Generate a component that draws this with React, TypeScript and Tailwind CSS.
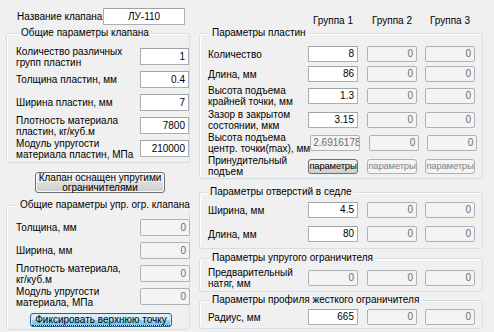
import React from "react";

function Field({ v, dis, cls, center }: { v: string; dis?: boolean; cls: string; center?: boolean }) {
  return (
    <div
      className={`${cls} shrink-0 flex items-center ${center ? "justify-center" : "justify-end pr-[3px]"} leading-none border ${
        dis
          ? "bg-[#f4f4f4] border-[#adb2b5] text-[#6d6d6d] rounded-[2px]"
          : "bg-white border-[#abadb3] border-t-[#9ea2a7] text-black"
      }`}
    >
      {v}
    </div>
  );
}

function Title({ children, cls }: { children: React.ReactNode; cls: string }) {
  return <div className={`self-start -mt-[7px] px-[2px] bg-[#f0f0f0] leading-[12px] whitespace-nowrap ${cls}`}>{children}</div>;
}

function LRow({ l1, l2, v, dis }: { l1: string; l2?: string; v: string; dis?: boolean }) {
  return (
    <div className="flex items-center h-[23px]">
      <div className="flex-1 pl-[9px] leading-[11px]">
        {l1}
        {l2 && <br />}
        {l2}
      </div>
      <Field v={v} dis={dis} cls={dis ? "w-[50px] h-[17px] -mr-[1px]" : "w-[49px] h-[17px]"} />
    </div>
  );
}

function RRow({
  h,
  l1,
  l2,
  v1,
  d1,
  v2 = "0",
  v3 = "0",
}: {
  h: string;
  l1: string;
  l2?: string;
  v1: string;
  d1?: boolean;
  v2?: string;
  v3?: string;
}) {
  return (
    <div className={`flex items-center pl-[8px] pr-[7px] ${h}`}>
      <div className="flex-1 leading-[11px] whitespace-nowrap">
        {l1}
        {l2 && <br />}
        {l2}
      </div>
      <Field v={v1} dis={d1} cls="w-[50px] h-[16px]" />
      <Field v={v2} dis cls="ml-[9px] w-[50px] h-[16px]" />
      <Field v={v3} dis cls="ml-[8px] w-[50px] h-[16px]" />
    </div>
  );
}

const groupCls = "flex flex-col border border-[#d5dfe5] rounded-[3px] shadow-[inset_1px_1px_0_#ffffff]";

export default function App() {
  return (
    <div className="w-[494px] h-[332px] overflow-hidden bg-[#f0f0f0] flex text-[10px] text-black font-['Liberation_Sans',Arial,sans-serif]">
      {/* Left column */}
      <div className="w-[196px] shrink-0 flex flex-col">
        <div className="mt-[8px] h-[17px] flex items-center">
          <div className="ml-[17px] w-[86px] whitespace-nowrap">Название клапана</div>
          <Field v="ЛУ-110" center cls="w-[82px] h-[17px]" />
        </div>

        <div className={`${groupCls} mt-[8px] ml-[6px] w-[184px] pb-[2px]`}>
          <Title cls="ml-[12px]">Общие параметры клапана</Title>
          <div className="mt-[6px] flex flex-col">
            <LRow l1="Количество различных" l2="групп пластин" v="1" />
            <LRow l1="Толщина пластин, мм" v="0.4" />
            <LRow l1="Ширина пластин, мм" v="7" />
            <LRow l1="Плотность материала" l2="пластин, кг/куб.м" v="7800" />
            <LRow l1="Модуль упругости" l2="материала пластин, МПа" v="210000" />
          </div>
        </div>

        <button className="mt-[9px] ml-[35px] w-[130px] h-[21px] flex flex-col items-center justify-center leading-[10px] border border-[#707070] rounded-[3px] shadow-[inset_0_0_0_1px_#fcfcfc] bg-[linear-gradient(to_bottom,#f2f2f2_0%,#ebebeb_50%,#dddddd_50%,#cfcfcf_100%)]">
          <span>Клапан оснащен упругими</span>
          <span>ограничителями</span>
        </button>

        <div className={`${groupCls} mt-[12px] ml-[6px] w-[184px] pb-[2px]`}>
          <Title cls="ml-[11px]">Общие параметры упр. огр. клапана</Title>
          <div className="mt-[5px] flex flex-col">
            <LRow l1="Толщина, мм" v="0" dis />
            <LRow l1="Ширина, мм" v="0" dis />
            <LRow l1="Плотность материала," l2="кг/куб.м" v="0" dis />
            <LRow l1="Модуль упругости" l2="материала, МПа" v="0" dis />
          </div>
          <button className="mt-[5px] ml-[23px] w-[142px] h-[14px] flex items-center justify-center border border-[#2c628b] rounded-[3px] shadow-[inset_0_0_0_1px_#d8effb] bg-[linear-gradient(to_bottom,#e5f4fc_0%,#c4e5f6_50%,#98d1ef_50%,#6cc0e8_100%)]">
            <span className="leading-[10px] border-b border-dotted border-[#1a1a1a] px-[3px]">Фиксировать верхнюю точку</span>
          </button>
        </div>
      </div>

      {/* Right column */}
      <div className="flex-1 flex flex-col">
        <div className="ml-[3px] w-[284px] mt-[12px] h-[16px] flex items-center pl-[9px] pr-[8px]">
          <div className="flex-1" />
          <div className="w-[50px] text-center whitespace-nowrap">Группа 1</div>
          <div className="ml-[9px] w-[50px] text-center whitespace-nowrap">Группа 2</div>
          <div className="ml-[8px] w-[50px] text-center whitespace-nowrap">Группа 3</div>
        </div>

        <div className={`${groupCls} mt-[5px] ml-[3px] w-[284px]`}>
          <Title cls="ml-[10px]">Параметры пластин</Title>
          <div className="mt-[5px] flex flex-col">
            <RRow h="h-[20px]" l1="Количество" v1="8" />
            <RRow h="h-[20px]" l1="Длина, мм" v1="86" />
            <RRow h="h-[23px]" l1="Высота подъема" l2="крайней точки, мм" v1="1.3" />
            <RRow h="h-[25px]" l1="Зазор в закрытом" l2="состоянии, мкм" v1="3.15" />
            <div className="flex items-center pl-[8px] pr-[7px] h-[22px]">
              <div className="flex-1 leading-[11px] whitespace-nowrap">
                Высота подъема
                <br />
                центр. точки(max), мм
              </div>
              <div className="w-[50px] h-[16px] shrink-0 flex items-center overflow-hidden whitespace-nowrap pl-[2px] leading-none border bg-[#f4f4f4] border-[#adb2b5] text-[#6d6d6d] rounded-[2px]">
                2.69161781
              </div>
              <Field v="0" dis cls="ml-[9px] w-[50px] h-[16px]" />
              <Field v="0" dis cls="ml-[8px] w-[50px] h-[16px]" />
            </div>
            <div className="flex items-center pl-[8px] pr-[7px] h-[24px]">
              <div className="flex-1 leading-[11px] whitespace-nowrap">
                Принудительный
                <br />
                подъем
              </div>
              <div className="w-[50px] h-[15px] shrink-0 flex items-center justify-center leading-none text-[9.5px] tracking-[-0.2px] whitespace-nowrap border border-[#707070] rounded-[3px] bg-[linear-gradient(to_bottom,#f2f2f2_0%,#ebebeb_50%,#dddddd_50%,#cfcfcf_100%)]">
                параметры
              </div>
              <div className="ml-[9px] w-[50px] h-[15px] shrink-0 flex items-center justify-center leading-none text-[9.5px] tracking-[-0.2px] whitespace-nowrap border border-[#adb2b5] rounded-[3px] bg-[#f4f4f4] text-[#838383]">
                параметры
              </div>
              <div className="ml-[8px] w-[50px] h-[15px] shrink-0 flex items-center justify-center leading-none text-[9.5px] tracking-[-0.2px] whitespace-nowrap border border-[#adb2b5] rounded-[3px] bg-[#f4f4f4] text-[#838383]">
                параметры
              </div>
            </div>
          </div>
        </div>

        <div className={`${groupCls} mt-[13px] ml-[3px] w-[284px] pb-[2px]`}>
          <Title cls="ml-[8px]">Параметры отверстий в седле</Title>
          <div className="flex flex-col">
            <RRow h="h-[24px]" l1="Ширина, мм" v1="4.5" />
            <RRow h="h-[24px]" l1="Длина, мм" v1="80" />
          </div>
        </div>

        <div className={`${groupCls} mt-[9px] ml-[3px] w-[284px]`}>
          <Title cls="ml-[10px]">Параметры упругого ограничителя</Title>
          <div className="flex flex-col">
            <RRow h="h-[27px]" l1="Предварительный" l2="натяг, мм" v1="0" d1 />
          </div>
        </div>

        <div className={`${groupCls} mt-[8px] ml-[3px] w-[284px]`}>
          <Title cls="ml-[10px]">Параметры профиля жесткого ограничителя</Title>
          <div className="flex flex-col">
            <RRow h="h-[22px]" l1="Радиус, мм" v1="665" />
          </div>
        </div>
      </div>
    </div>
  );
}
